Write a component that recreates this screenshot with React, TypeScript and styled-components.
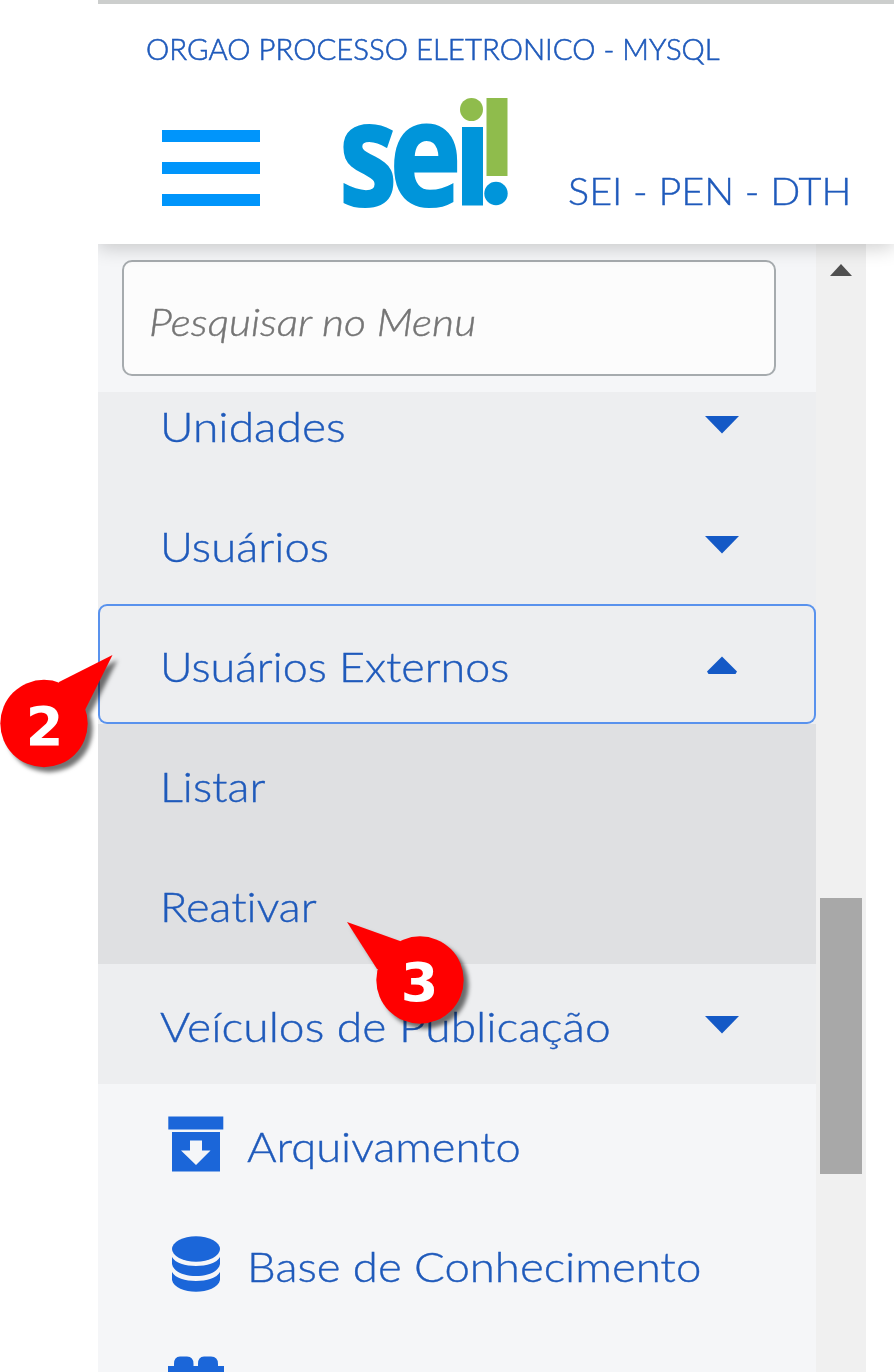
import React from 'react';
import styled, { createGlobalStyle } from 'styled-components';

const Global = createGlobalStyle`
  * { box-sizing: border-box; }
  html, body { margin: 0; background: #fff; overflow: hidden; }
  body {
    font-family: Lato, "Open Sans", sans-serif;
    font-weight: 300;
    font-variant-ligatures: none;
    color: #1f5abb;
    -webkit-text-stroke: 0.4px currentColor;
  }
`;

const Page = styled.div`
  position: relative;
  width: 894px;
  height: 1372px;
  padding-left: 98px;
  overflow: hidden;
  display: flex;
  flex-direction: column;
`;

const Header = styled.header`
  position: relative;
  z-index: 1;
  flex: none;
  height: 244px;
  border-top: 4px solid #cccecd;
  background: #fff;
  box-shadow: 0 4px 18px rgba(0, 0, 0, 0.19);
  clip-path: inset(0 0 -30px 0);
`;

const Stretched = styled.span<{ $sx: number }>`
  display: inline-block;
  white-space: nowrap;
  transform: scaleX(${(p) => p.$sx});
  transform-origin: left center;
`;

const Organ = styled.div`
  padding: 24px 0 0 48px;
  height: 94px;
  font-size: 30px;
  line-height: 40px;
  -webkit-text-stroke-width: 0.6px;
`;

const Brand = styled.div`
  display: flex;
  align-items: flex-start;
  padding-left: 64px;
`;

const Burger = styled.button`
  display: flex;
  flex-direction: column;
  gap: 20px;
  width: 98px;
  margin-top: 32px;
  padding: 0;
  border: 0;
  background: none;
`;

const Bar = styled.span`
  height: 12px;
  background: #0095fb;
`;

const Logo = styled.svg`
  display: block;
  overflow: visible;
  margin-left: 82px;
  font-family: "Open Sans", sans-serif;
  font-weight: 700;
  font-size: 145px;
  -webkit-text-stroke-width: 0;
`;

const System = styled(Stretched)`
  margin: 70px 0 0 58px;
  font-size: 36.5px;
  line-height: 46px;
`;

const Body = styled.div`
  flex: 1;
  display: flex;
  min-height: 0;
`;

const Menu = styled.nav`
  width: 718px;
  background: #f5f6f8;
`;

const SearchArea = styled.div`
  height: 148px;
  padding: 16px 40px 16px 24px;
`;

const Search = styled.div`
  display: flex;
  align-items: center;
  width: 654px;
  height: 116px;
  padding: 8px 24px 0 25px;
  border: 2px solid #a6abae;
  border-radius: 10px;
  background: #fcfcfc;
  color: #757575;
  font-size: 36.5px;
  font-style: italic;
`;

const Row = styled.div<{ $tone?: 'sub' | 'leaf'; $cut?: boolean; $focus?: boolean }>`
  display: flex;
  align-items: flex-end;
  justify-content: space-between;
  height: ${(p) => (p.$cut ? 92 : 120)}px;
  padding: 0 76px 33px 62px;
  background: ${(p) => (p.$tone === 'leaf' ? '#dfe0e2' : p.$tone === 'sub' ? '#edeef0' : 'transparent')};
  ${(p) => p.$focus && 'box-shadow: inset 0 0 0 2px #5992ed; border-radius: 9px;'}
`;

const FocusBack = styled.div`
  background: #edeef0;
`;

const Label = styled(Stretched)`
  font-size: 42px;
  line-height: 50px;
`;

const Entry = styled.div`
  display: flex;
  align-items: flex-end;
  gap: 23px;
  height: 120px;
  padding: 0 0 33px 70px;
  > svg { margin-bottom: -1px; }
`;

const Caret = styled.svg`
  display: block;
  margin-bottom: 17px;
`;

const Scrollbar = styled.div`
  width: 50px;
  padding: 20px 4px 0;
  background: #f0f0f0;
  display: flex;
  flex-direction: column;
  align-items: center;
`;

const Thumb = styled.div`
  width: 42px;
  height: 276px;
  margin-top: 622px;
  background: #a8a8a8;
`;

const Callout = styled.svg<{ $x: number; $y: number }>`
  position: absolute;
  z-index: 2;
  left: ${(p) => p.$x}px;
  top: ${(p) => p.$y}px;
  overflow: visible;
  filter: drop-shadow(5px 5px 2px rgba(0, 0, 0, 0.55));
`;

const Digit = styled.text`
  font: bold 54px "DejaVu Sans", sans-serif;
  fill: #fff;
  text-anchor: middle;
  -webkit-text-stroke-width: 0;
`;

const Arrow = ({ up }: { up?: boolean }) => (
  <Caret width="36" height="18" viewBox="0 0 36 18">
    <path d={up ? 'M18 .5L33 15.500L31.500 18H4.500L3 15.500Z' : 'M1 0H35L18 17.500Z'} fill="#1459c6" />
  </Caret>
);

const ArchiveIcon = () => (
  <svg width="56" height="56" viewBox="0 0 56 56" fill="#1b66d9">
    <path d="M.5.5H55.500V13.500H.5Z" transform="translate(-.2)" />
    <path fillRule="evenodd" d="M4 16H52V55.500H4ZM22 24.500V34.500H13L28 49L42.500 34.500H34V24.500Z" />
  </svg>
);

const DatabaseIcon = () => (
  <svg width="56" height="56" viewBox="0 0 56 56" fill="#1b66d9">
    <ellipse cx="28" cy="13" rx="24" ry="12.700" />
    <path d="M4 21C10 33 46 33 52 21V28C49 44 7 44 4 28Z" />
    <path d="M4 36C10 48 46 48 52 36V44C49 59.500 7 59.500 4 44Z" />
  </svg>
);

const BlocksIcon = () => (
  <svg width="56" height="56" viewBox="0 0 56 56" fill="#1b66d9">
    <path d="M0 10H6V8Q6 .5 12 .5H19Q25.500 .5 25.500 8V10H30V8Q30 .5 36 .5H43Q50 .5 50 8V10H56V50H0Z" />
  </svg>
);

export default function App() {
  return (
    <Page>
      <Global />
      <Header>
        <Organ><Stretched $sx={0.979}>ORGAO PROCESSO ELETRONICO - MYSQL</Stretched></Organ>
        <Brand>
          <Burger aria-label="Menu"><Bar /><Bar /><Bar /></Burger>
          <Logo width="168" height="112" viewBox="342 98 168 112" fill="#0095da">
            <g stroke="#0095da" strokeWidth="2">
              <text x="339" y="205.500" textLength="58" lengthAdjust="spacingAndGlyphs">s</text>
              <text x="389.500" y="205.500" textLength="72" lengthAdjust="spacingAndGlyphs">e</text>
            </g>
            <rect x="462" y="127" width="21" height="78.500" />
            <circle cx="496" cy="193.500" r="11.700" />
            <circle cx="471.500" cy="109.500" r="11.500" fill="#8fbc4c" />
            <rect x="486.500" y="98" width="21" height="78" fill="#8fbc4c" />
          </Logo>
          <System $sx={1.083}>SEI - PEN - DTH</System>
        </Brand>
      </Header>
      <Body>
        <Menu>
          <SearchArea><Search role="searchbox"><Stretched $sx={1.17}>Pesquisar no Menu</Stretched></Search></SearchArea>
          <Row $tone="sub" $cut><Label $sx={1.1}>Unidades</Label><Arrow /></Row>
          <Row $tone="sub"><Label $sx={1.083}>Usuários</Label><Arrow /></Row>
          <FocusBack><Row $tone="sub" $focus><Label $sx={1.068}>Usuários Externos</Label><Arrow up /></Row></FocusBack>
          <Row $tone="leaf"><Label $sx={1.075}>Listar</Label></Row>
          <Row $tone="leaf"><Label $sx={1.075}>Reativar</Label></Row>
          <Row $tone="sub"><Label $sx={1.1}>Veículos de Publicação</Label><Arrow /></Row>
          <Entry><ArchiveIcon /><Label $sx={1.078}>Arquivamento</Label></Entry>
          <Entry><DatabaseIcon /><Label $sx={1.084}>Base de Conhecimento</Label></Entry>
          <Entry><BlocksIcon /></Entry>
        </Menu>
        <Scrollbar>
          <svg width="22" height="12" viewBox="0 0 22 12"><path d="M11 0L22 12H0Z" fill="#505050" /></svg>
          <Thumb />
        </Scrollbar>
      </Body>
      <Callout $x={0} $y={655} width="114" height="114" viewBox="0 0 114 114">
        <path d="M112.500 0L59 27V55H85Z" fill="#f00" />
        <circle cx="44" cy="68.500" r="43.700" fill="#f00" />
        <Digit x="44.500" y="90">2</Digit>
      </Callout>
      <Callout $x={347} $y={922} width="118" height="104" viewBox="0 0 118 104">
        <path d="M0 0L53 19V47H30Z" fill="#f00" />
        <circle cx="73" cy="58" r="43.700" fill="#f00" />
        <Digit x="72.500" y="79">3</Digit>
      </Callout>
    </Page>
  );
}
